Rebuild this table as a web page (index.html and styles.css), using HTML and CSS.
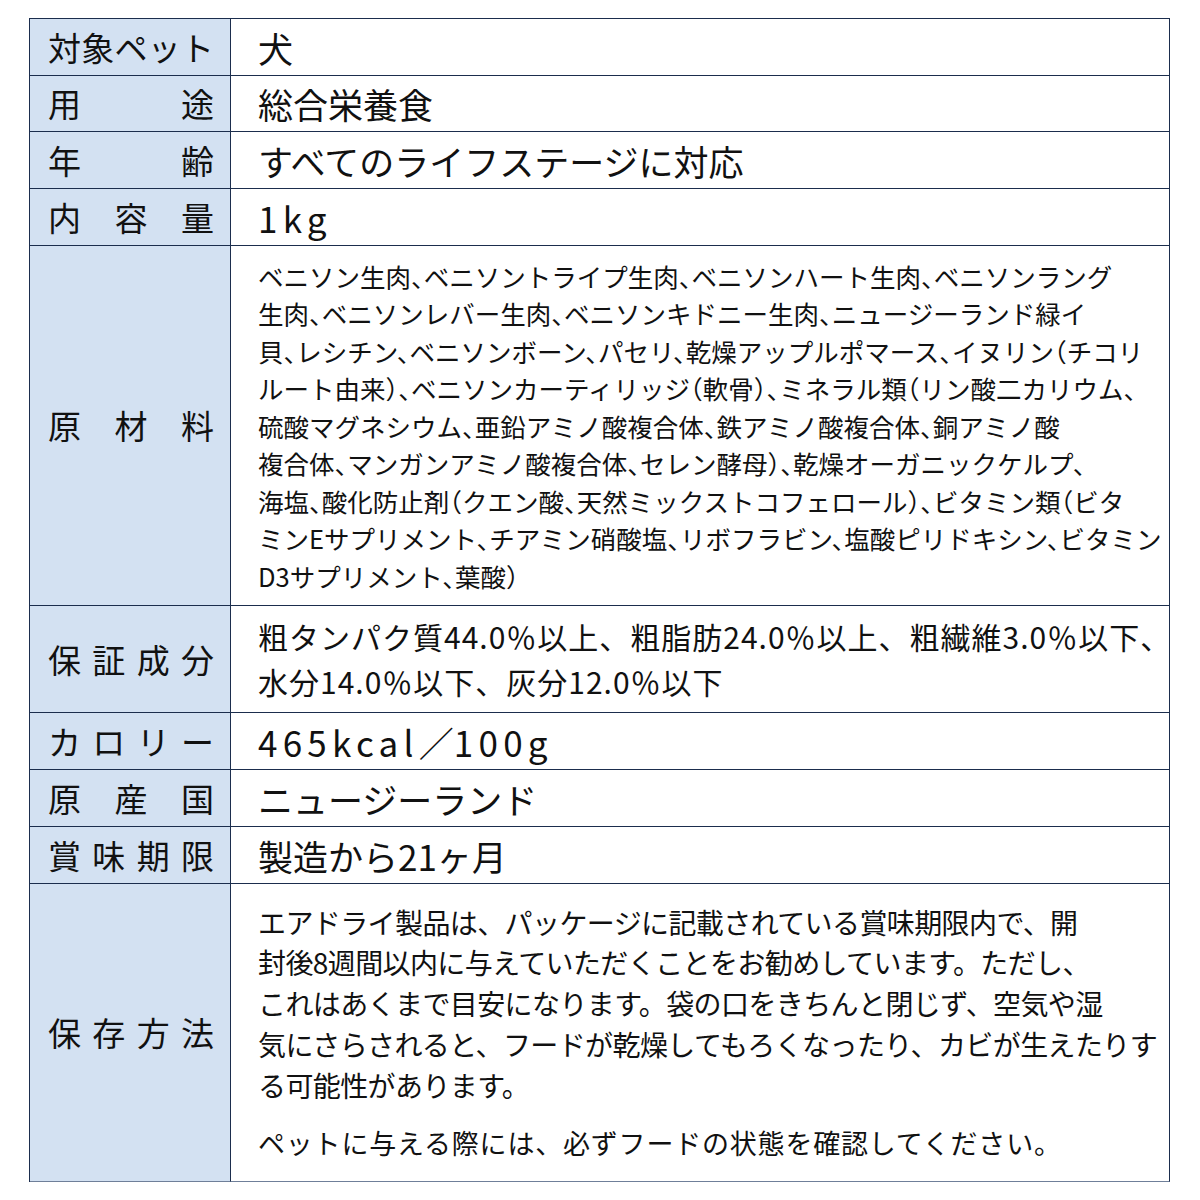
FILE: index.html
```html
<!DOCTYPE html>
<html lang="ja">
<head>
<meta charset="utf-8">
<link rel="stylesheet" href="styles.css">
</head>
<body>
<div class="spec">
  <div class="label"><span>対象ペット</span></div>
  <div class="value big">犬</div>

  <div class="label"><span>用途</span></div>
  <div class="value big">総合栄養食</div>

  <div class="label"><span>年齢</span></div>
  <div class="value big">すべてのライフステージに対応</div>

  <div class="label"><span>内容量</span></div>
  <div class="value big"><span class="lat">1kg</span></div>

  <div class="label"><span>原材料</span></div>
  <div class="value small">ベニソン生肉、ベニソントライプ生肉、ベニソンハート生肉、ベニソンラング<br>生肉、ベニソンレバー生肉、ベニソンキドニー生肉、ニュージーランド緑イ<br>貝、レシチン、ベニソンボーン、パセリ、乾燥アップルポマース、イヌリン（チコリ<br>ルート由来）、ベニソンカーティリッジ（軟骨）、ミネラル類（リン酸二カリウム、<br>硫酸マグネシウム、亜鉛アミノ酸複合体、鉄アミノ酸複合体、銅アミノ酸<br>複合体、マンガンアミノ酸複合体、セレン酵母）、乾燥オーガニックケルプ、<br>海塩、酸化防止剤（クエン酸、天然ミックストコフェロール）、ビタミン類（ビタ<br>ミンEサプリメント、チアミン硝酸塩、リボフラビン、塩酸ピリドキシン、ビタミン<br>D3サプリメント、葉酸）</div>

  <div class="label"><span>保証成分</span></div>
  <div class="value mid">粗タンパク質44.0％以上、粗脂肪24.0％以上、粗繊維3.0％以下、<br>水分14.0％以下、灰分12.0％以下</div>

  <div class="label"><span>カロリー</span></div>
  <div class="value big"><span class="lat">465kcal</span>／<span class="lat">100g</span></div>

  <div class="label"><span>原産国</span></div>
  <div class="value big">ニュージーランド</div>

  <div class="label"><span>賞味期限</span></div>
  <div class="value big">製造から21ヶ月</div>

  <div class="label last"><span>保存方法</span></div>
  <div class="value store last">
    <p class="p1">エアドライ製品は、パッケージに記載されている賞味期限内で、開<br>封後8週間以内に与えていただくことをお勧めしています。ただし、<br>これはあくまで目安になります。袋の口をきちんと閉じず、空気や湿<br>気にさらされると、フードが乾燥してもろくなったり、カビが生えたりす<br>る可能性があります。</p>
    <p class="p2">ペットに与える際には、必ずフードの状態を確認してください。</p>
  </div>
</div>
</body>
</html>
```

FILE: styles.css
```css
html, body {
  margin: 0;
  padding: 0;
  background: #ffffff;
}

body {
  font-family: "Noto Sans CJK JP", "Noto Sans", sans-serif;
  color: #111111;
}

.spec {
  margin: 18px 0 0 29px;
  width: 1141px;
  box-sizing: border-box;
  display: grid;
  grid-template-columns: 201px 939px;
  grid-template-rows: 57px 56px 57px 57px 360px 107px 57px 57px 57px 298px;
  border-top: 1px solid #1b2d4d;
  border-left: 1px solid #1b2d4d;
}

.label,
.value {
  box-sizing: border-box;
  border-right: 1px solid #1b2d4d;
  border-bottom: 1px solid #1b2d4d;
  display: flex;
  align-items: center;
  min-width: 0;
  overflow: hidden;
}

.label.last,
.value.last {
  border-bottom-color: #6f7f99;
}

.label {
  background: #d3e1f2;
  padding: 0 16px 0 18px;
  font-size: 33px;
  line-height: 1;
}

.label span {
  flex: 1;
  text-align: justify;
  text-align-last: justify;
}

.value {
  padding: 0 8px 0 27px;
}

.big {
  font-size: 35px;
  line-height: 1;
}

.lat {
  letter-spacing: 0.15em;
}

.small {
  font-size: 25.5px;
  line-height: 37.5px;
  font-feature-settings: "halt";
  white-space: nowrap;
}

.mid {
  font-size: 30px;
  line-height: 45px;
  letter-spacing: 1px;
  white-space: nowrap;
}

.store {
  flex-direction: column;
  align-items: flex-start;
  justify-content: center;
  white-space: nowrap;
}

.store p {
  margin: 0;
}

.p1 {
  font-size: 28px;
  line-height: 40.7px;
  letter-spacing: -0.6px;
}

.p2 {
  margin-top: 18px !important;
  font-size: 27px;
  line-height: 40px;
  letter-spacing: 0.8px;
}
```
